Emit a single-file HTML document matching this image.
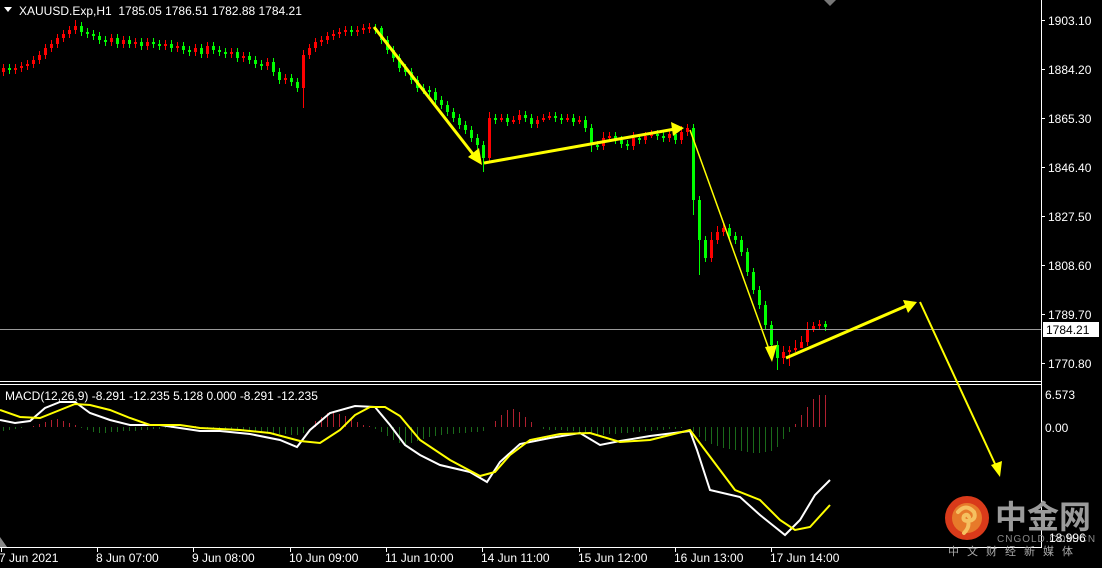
<!DOCTYPE html>
<html><head><meta charset="utf-8"><style>
html,body{margin:0;padding:0;background:#000;width:1102px;height:568px;overflow:hidden}
svg{display:block}
text{font-family:"Liberation Sans",Tahoma,sans-serif;font-size:12px;fill:#fff}
</style></head><body>
<svg width="1102" height="568" xmlns="http://www.w3.org/2000/svg">
<rect width="1102" height="568" fill="#000"/>
<!-- histogram -->
<path fill="none" stroke="#1a6a1a" stroke-width="1" d="M3.5 427V431M9.5 427V430M15.5 427V429M21.5 427V428M81.5 427V428M87.5 427V430M93.5 427V432M99.5 427V433M105.5 427V433M111.5 427V432M117.5 427V432M123.5 427V431M129.5 427V431M135.5 427V431M141.5 427V430M147.5 427V430M153.5 427V429M159.5 427V429M165.5 427V428M171.5 427V428M207.5 427V428M213.5 427V429M219.5 427V429M225.5 427V430M231.5 427V430M237.5 427V431M243.5 427V431M249.5 427V432M255.5 427V432M261.5 427V432M267.5 427V433M273.5 427V433M279.5 427V434M285.5 427V434M291.5 427V435M297.5 427V435M303.5 427V433M375.5 427V429M381.5 427V432M387.5 427V436M393.5 427V440M399.5 427V443M405.5 427V445M411.5 427V443M417.5 427V441M423.5 427V439M429.5 427V437M435.5 427V436M441.5 427V435M447.5 427V434M453.5 427V434M459.5 427V433M465.5 427V433M471.5 427V432M477.5 427V432M483.5 427V431M543.5 427V429M549.5 427V430M555.5 427V430M561.5 427V430M567.5 427V431M573.5 427V431M579.5 427V432M585.5 427V433M591.5 427V434M597.5 427V435M603.5 427V435M609.5 427V434M615.5 427V434M621.5 427V433M627.5 427V433M633.5 427V432M639.5 427V432M645.5 427V431M651.5 427V431M657.5 427V430M663.5 427V430M669.5 427V429M675.5 427V429M681.5 427V428M693.5 427V432M699.5 427V437M705.5 427V441M711.5 427V444M717.5 427V446M723.5 427V448M729.5 427V449M735.5 427V450M741.5 427V451M747.5 427V452M753.5 427V453M759.5 427V453M765.5 427V452M771.5 427V451M777.5 427V447M783.5 427V439M789.5 427V432"/>
<path fill="none" stroke="#b02030" stroke-width="1" d="M33.5 427V426M39.5 427V424M45.5 427V422M51.5 427V420M57.5 427V419M63.5 427V421M69.5 427V423M75.5 427V425M189.5 427V426M195.5 427V426M315.5 427V421M321.5 427V417M327.5 427V413M333.5 427V412M339.5 427V414M345.5 427V416M351.5 427V419M357.5 427V422M363.5 427V425M369.5 427V426M495.5 427V421M501.5 427V415M507.5 427V410M513.5 427V409M519.5 427V412M525.5 427V417M531.5 427V422M795.5 427V424M801.5 427V415M807.5 427V407M813.5 427V399M819.5 427V395M825.5 427V395"/>
<!-- candles: red = up, green = down -->
<path fill="none" stroke="#ff0000" stroke-width="1" d="M3.5 64V76M15.5 64V74M21.5 62V72M27.5 60V70M33.5 56V68M39.5 51V64M45.5 44V59M51.5 40V52M57.5 34V48M63.5 30V42M69.5 26V38M75.5 20V34M111.5 34V46M123.5 36V48M135.5 38V48M147.5 38V50M165.5 40V50M177.5 42V52M195.5 44V56M207.5 42V58M231.5 48V58M243.5 52V62M267.5 58V70M285.5 74V84M303.5 50V108M309.5 44V59M315.5 38V52M321.5 36V46M327.5 32V44M333.5 30V40M339.5 28V38M345.5 26V36M357.5 26V36M363.5 24V34M369.5 23V33M489.5 112V162M501.5 114V122M513.5 116V124M519.5 110V124M537.5 116V128M543.5 114V122M549.5 112V120M567.5 114V122M579.5 116V124M603.5 132V150M609.5 132V140M633.5 132V150M645.5 132V144M651.5 130V138M669.5 130V142M681.5 126V144M687.5 124V136M711.5 232V262M717.5 226V244M723.5 222V236M783.5 346V364M789.5 346V366M795.5 340V352M801.5 336V348M807.5 322V346M813.5 322V332M819.5 320V330"/>
<path fill="none" stroke="#ff0000" stroke-width="3" d="M3.5 68V72M15.5 68V70M21.5 66V68M27.5 64V66M33.5 60V64M39.5 55V60M45.5 48V55M51.5 44V48M57.5 38V44M63.5 34V38M69.5 30V34M75.5 26V30M111.5 38V42M123.5 40V44M135.5 42V44M147.5 42V46M165.5 44V46M177.5 46V48M195.5 48V52M207.5 46V54M231.5 52V54M243.5 56V58M267.5 62V66M285.5 78V80M303.5 55V88M309.5 48V55M315.5 42V48M321.5 40V42M327.5 36V40M333.5 34V36M339.5 32V34M345.5 30V32M357.5 30V32M363.5 28V30M369.5 27V29M489.5 118V158M501.5 118V120M513.5 120V122M519.5 115V120M537.5 120V124M543.5 118V120M549.5 116V118M567.5 118V120M579.5 120V122M603.5 138V146M609.5 136V138M633.5 138V146M645.5 136V140M651.5 134V136M669.5 134V138M681.5 132V140M687.5 128V132M711.5 240V258M717.5 232V240M723.5 228V232M783.5 352V358M789.5 350V352M795.5 348V350M801.5 342V348M807.5 330V342M813.5 326V330M819.5 324V326"/>
<path fill="none" stroke="#00ff00" stroke-width="1" d="M9.5 64V74M81.5 22V36M87.5 28V38M93.5 30V40M99.5 32V44M105.5 36V46M117.5 34V48M129.5 36V48M141.5 38V50M153.5 38V48M159.5 40V50M171.5 40V52M183.5 42V54M189.5 46V56M201.5 44V58M213.5 42V54M219.5 46V56M225.5 48V58M237.5 48V62M249.5 52V64M255.5 56V68M261.5 60V70M273.5 58V76M279.5 68V84M291.5 74V86M297.5 78V92M351.5 26V36M375.5 24V34M381.5 26V44M387.5 36V54M393.5 46V62M399.5 54V72M405.5 64V76M411.5 68V84M417.5 76V92M423.5 84V94M429.5 86V96M435.5 88V104M441.5 96V109M447.5 101V116M453.5 108V122M459.5 114V129M465.5 121V134M471.5 126V142M477.5 134V149M483.5 141V172M495.5 114V124M507.5 114V126M525.5 111V122M531.5 114V128M555.5 112V122M561.5 114V124M573.5 114V126M585.5 116V132M591.5 124V152M597.5 141V150M615.5 132V144M621.5 136V148M627.5 140V150M639.5 134V144M657.5 130V140M663.5 132V142M675.5 130V144M693.5 124V215M699.5 196V275M705.5 236V262M729.5 224V240M735.5 232V244M741.5 236V256M747.5 248V276M753.5 268V294M759.5 286V309M765.5 301V329M771.5 321V349M777.5 341V370M825.5 321V331"/>
<path fill="none" stroke="#00ff00" stroke-width="3" d="M9.5 68V70M81.5 26V32M87.5 32V34M93.5 34V36M99.5 36V40M105.5 40V42M117.5 38V44M129.5 40V44M141.5 42V46M153.5 42V44M159.5 44V46M171.5 44V48M183.5 46V50M189.5 50V52M201.5 48V54M213.5 46V50M219.5 50V52M225.5 52V54M237.5 52V58M249.5 56V60M255.5 60V64M261.5 64V66M273.5 62V72M279.5 72V80M291.5 78V82M297.5 82V88M351.5 30V32M375.5 28V30M381.5 28V40M387.5 40V50M393.5 50V58M399.5 58V68M405.5 68V72M411.5 72V80M417.5 80V88M423.5 88V90M429.5 90V92M435.5 92V100M441.5 100V105M447.5 105V112M453.5 112V118M459.5 118V125M465.5 125V130M471.5 130V138M477.5 138V145M483.5 145V158M495.5 118V120M507.5 118V122M525.5 115V118M531.5 118V124M555.5 116V118M561.5 118V120M573.5 118V122M585.5 120V128M591.5 128V145M597.5 145V147M615.5 136V140M621.5 140V144M627.5 144V146M639.5 138V140M657.5 134V136M663.5 136V138M675.5 134V140M693.5 128V200M699.5 200V240M705.5 240V258M729.5 228V236M735.5 236V240M741.5 240V252M747.5 252V272M753.5 272V290M759.5 290V305M765.5 305V325M771.5 325V345M777.5 345V358M825.5 324V327"/>
<!-- frames -->
<line x1="1041.5" y1="0" x2="1041.5" y2="547" stroke="#fff"/>
<line x1="0" y1="381.5" x2="1042" y2="381.5" stroke="#fff"/>
<line x1="0" y1="384.5" x2="1042" y2="384.5" stroke="#fff"/>
<line x1="0" y1="547.5" x2="1042" y2="547.5" stroke="#fff"/>
<line x1="0" y1="329.5" x2="1041" y2="329.5" stroke="#9a9a9a"/>
<!-- price axis -->
<path stroke="#fff" d="M1041 20.5H1045M1041 69.5H1045M1041 118.5H1045M1041 167.5H1045M1041 216.5H1045M1041 265.5H1045M1041 314.5H1045M1041 363.5H1045"/>
<text x="1048" y="25">1903.10</text>
<text x="1048" y="74">1884.20</text>
<text x="1048" y="123">1865.30</text>
<text x="1048" y="172">1846.40</text>
<text x="1048" y="221">1827.50</text>
<text x="1048" y="270">1808.60</text>
<text x="1048" y="319">1789.70</text>
<text x="1048" y="368">1770.80</text>
<rect x="1043" y="322" width="56" height="15" fill="#fff"/>
<text x="1046" y="334" style="fill:#000">1784.21</text>
<text x="1045" y="399">6.573</text>
<text x="1045" y="432">0.00</text>
<!-- header -->
<polygon points="4,7 12,7 8,12" fill="#fff"/>
<text x="19" y="15" xml:space="preserve">XAUUSD.Exp,H1  1785.05 1786.51 1782.88 1784.21</text>
<polygon points="824,0 836,0 830,6" fill="#777"/>
<text x="5" y="400">MACD(12,26,9) -8.291 -12.235 5.128 0.000 -8.291 -12.235</text>
<polygon points="0,537 0,547 7,547" fill="#888"/>
<!-- macd lines -->
<polyline fill="none" stroke="#fff" stroke-width="2" points="0,420 15,423 30,421 45,408 60,402 75,402 90,413 110,420 130,425 160,425 200,431 220,431 250,434 280,440 297,447 310,430 330,413 355,406 375,407 390,425 405,445 420,455 440,465 470,472 487,482 500,462 520,444 550,438 580,433 600,445 620,441 650,436 690,431 697,450 710,490 740,497 760,515 785,535 800,520 815,495 830,480"/>
<polyline fill="none" stroke="#ff0" stroke-width="2" points="0,410 20,417 40,418 60,410 75,404 90,405 110,410 130,418 150,425 180,425 200,428 240,430 270,433 300,441 320,443 340,430 355,415 370,407 385,407 400,416 420,440 450,460 480,476 495,472 510,455 530,440 560,434 590,433 620,442 650,440 690,430 705,450 720,470 735,490 760,500 780,520 795,530 810,527 830,505"/>
<!-- arrows -->
<g fill="#ff0" stroke="#ff0">
<line x1="374" y1="27" x2="476" y2="158" stroke-width="3"/>
<polygon points="482,165 468,157 479,148" stroke="none"/>
<line x1="484" y1="163" x2="675" y2="129" stroke-width="3"/>
<polygon points="684,128 671,122 673,136" stroke="none"/>
<line x1="690" y1="130" x2="770" y2="352" stroke-width="1.5"/>
<polygon points="772,362 765,347 777,345" stroke="none"/>
<line x1="786" y1="358" x2="906" y2="306" stroke-width="3"/>
<polygon points="917,302 903,300 908,313" stroke="none"/>
<line x1="920" y1="302" x2="996" y2="466" stroke-width="2"/>
<polygon points="1000,477 991,465 1002,461" stroke="none"/>
</g>
<!-- dates -->
<path stroke="#fff" d="M1.5 547V552M97.5 547V552M193.5 547V552M290.5 547V552M386.5 547V552M482.5 547V552M579.5 547V552M675.5 547V552M771.5 547V552"/>
<text x="-1" y="562">7 Jun 2021</text>
<text x="96" y="562">8 Jun 07:00</text>
<text x="192" y="562">9 Jun 08:00</text>
<text x="289" y="562">10 Jun 09:00</text>
<text x="385" y="562">11 Jun 10:00</text>
<text x="481" y="562">14 Jun 11:00</text>
<text x="578" y="562">15 Jun 12:00</text>
<text x="674" y="562">16 Jun 13:00</text>
<text x="770" y="562">17 Jun 14:00</text>
<!-- watermark -->
<circle cx="967" cy="518" r="22" fill="#d93a1a"/>
<circle cx="967" cy="518" r="15" fill="#e77a2a"/>
<path d="M958,512 q8,-9 16,0 q3,8 -6,9 q-6,0 -4,-5 q3,-3 5,1 M968,521 q2,6 -4,12" fill="none" stroke="#f5c060" stroke-width="4" stroke-linecap="round"/>
<text x="995" y="528" style="font-family:'Noto Sans CJK SC',sans-serif;font-size:32px;font-weight:bold;fill:#9b9b9b">中金网</text>
<text x="997" y="542" style="font-size:10px;fill:#8a8a8a;letter-spacing:1px">CNGOLD.COM.CN</text>
<text x="1049" y="542" style="font-size:12px">18.996</text>
<text x="948" y="555" style="font-family:'Noto Sans CJK SC',sans-serif;font-size:11px;fill:#aaa;letter-spacing:8px">中文财经新媒体</text>
</svg>
</body></html>
